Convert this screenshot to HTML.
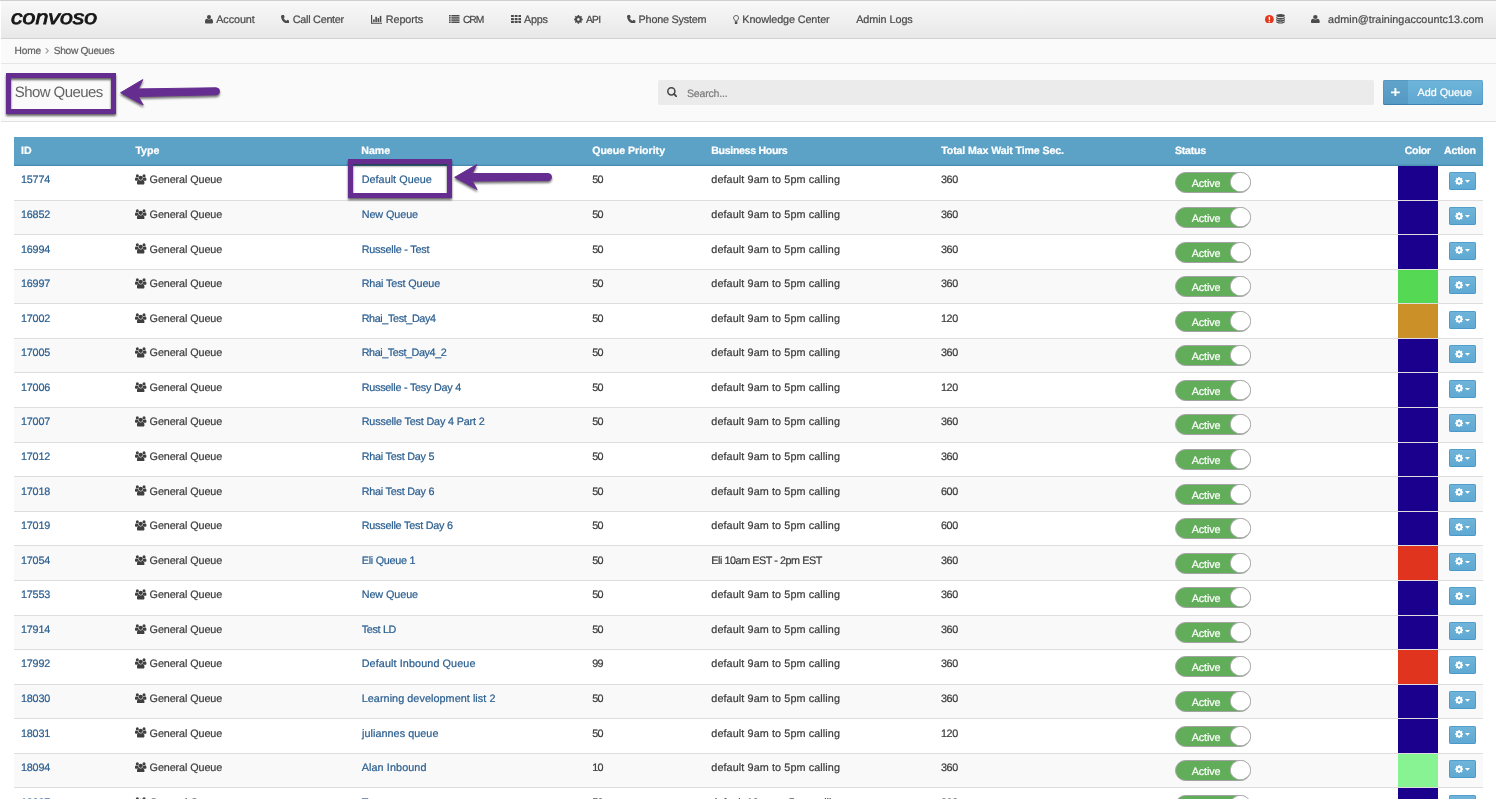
<!DOCTYPE html>
<html lang="en"><head><meta charset="utf-8"><title>Show Queues</title><style>
html,body{margin:0;padding:0;background:#fff}
body{width:1496px;height:799px;overflow:hidden;position:relative;font-family:"Liberation Sans",sans-serif}
#w{position:absolute;left:0;top:0;width:1496px;height:799px;overflow:hidden;will-change:transform}
.t{position:absolute;white-space:nowrap;line-height:16px;text-rendering:geometricPrecision;-webkit-text-stroke:.22px currentColor}
.i{position:absolute;display:block}
.tg{position:absolute;width:75.5px;height:20.6px;box-sizing:border-box;border:1px solid #a3a3a3;border-radius:11px;background:#61ad5a}
.tg i{position:absolute;right:-1px;top:-0.6px;width:20.8px;height:19.8px;border-radius:50%;background:#fff;box-shadow:inset 0 0 0 .7px rgba(125,125,125,.75)}
.ab{position:absolute;width:27px;height:18px;border-radius:2px;background:linear-gradient(#70b5da,#5ea8d2);box-shadow:inset 0 0 0 .8px rgba(55,140,195,.7)}
</style></head><body><div id="w">
<div style="position:absolute;left:0.00px;top:0.00px;width:1496.00px;height:1.00px;background:#cfcfcf"></div>
<div style="position:absolute;left:1.00px;top:1.00px;width:1495.00px;height:37.00px;background:linear-gradient(#f8f8f8,#e8e8e8)"></div>
<div style="position:absolute;left:1.00px;top:38.00px;width:1495.00px;height:1.00px;background:#d2d2d2"></div>
<div style="position:absolute;left:1.00px;top:39.00px;width:1495.00px;height:24.00px;background:#fafafa"></div>
<div style="position:absolute;left:1.00px;top:63.00px;width:1495.00px;height:1.00px;background:#e6e6e6"></div>
<div style="position:absolute;left:1.00px;top:64.00px;width:1495.00px;height:57.00px;background:#fafafa"></div>
<div style="position:absolute;left:1.00px;top:121.00px;width:1495.00px;height:1.00px;background:#e2e2e2"></div>
<nav aria-label="Main navigation">
<span class="t" style="left:10.6px;top:1px;font-size:19.8px;line-height:34px;font-style:italic;color:#161616;letter-spacing:0px;-webkit-text-stroke:0.8px #161616;transform:scaleX(1.17);transform-origin:0 50%">convoso</span>
<svg class="i" style="left:205.00px;top:15.30px;width:8.00px;height:8.50px;color:#4b4b4b" viewBox="0 0 14 15" preserveAspectRatio="none"><circle cx="7" cy="3.700" r="3.600" fill="currentColor"/><path fill="currentColor" d="M0 12.600v-1.400c0-3 1.500-4.500 3.200-4.600 1 .9 2.300 1.400 3.800 1.400s2.800-.5 3.800-1.400c1.700.1 3.200 1.600 3.200 4.600v1.400c0 1.300-1 2.400-2.400 2.400H2.400C1 15 0 13.900 0 12.600z"/></svg>
<span class="t " style="left:216.20px;top:12.00px;font-size:10.80px;color:#4b4b4b;letter-spacing:-0.067px;">Account</span>
<svg class="i" style="left:280.70px;top:14.80px;width:8.40px;height:8.60px;color:#4b4b4b" viewBox="0.8 0.8 14.4 14.4" preserveAspectRatio="none"><path fill="currentColor" d="M3.400.8 5.800.8 7.200 4.600 5.300 5.900C6.200 7.900 8.100 9.800 10.100 10.700L11.400 8.800 15.200 10.200 15.200 12.600C15.200 14 14 15.200 12.600 15.200 6.100 14.800 1.200 9.900.8 3.400.8 2 2 .8 3.400.8z"/></svg>
<span class="t " style="left:292.80px;top:12.00px;font-size:10.80px;color:#4b4b4b;letter-spacing:-0.260px;">Call Center</span>
<svg class="i" style="left:370.50px;top:14.80px;width:11.70px;height:8.80px;color:#4b4b4b" viewBox="0 0 20 16" preserveAspectRatio="none"><path fill="currentColor" d="M0 0h2v14H20v2H0z"/><rect x="3.600" y="8" width="2.700" height="4.800" fill="currentColor"/><rect x="7.400" y="3.200" width="2.700" height="9.600" fill="currentColor"/><rect x="11.200" y="5.600" width="2.700" height="7.200" fill="currentColor"/><rect x="15" y="1.600" width="2.700" height="11.200" fill="currentColor"/></svg>
<span class="t " style="left:385.80px;top:12.00px;font-size:10.80px;color:#4b4b4b;letter-spacing:-0.083px;">Reports</span>
<svg class="i" style="left:449.20px;top:15.00px;width:10.50px;height:8.00px;color:#4b4b4b" viewBox="0 0 20 16" preserveAspectRatio="none"><g fill="currentColor"><rect x="0" y="0.00" width="3.2" height="3"/><rect x="4.400" y="0.00" width="15.600" height="3"/><rect x="0" y="4.35" width="3.2" height="3"/><rect x="4.400" y="4.35" width="15.600" height="3"/><rect x="0" y="8.70" width="3.2" height="3"/><rect x="4.400" y="8.70" width="15.600" height="3"/><rect x="0" y="13.00" width="3.2" height="3"/><rect x="4.400" y="13.00" width="15.600" height="3"/></g></svg>
<span class="t " style="left:462.90px;top:13.00px;font-size:10.30px;color:#4b4b4b;letter-spacing:-1.025px;">CRM</span>
<svg class="i" style="left:510.70px;top:15.00px;width:10.30px;height:8.00px;color:#4b4b4b" viewBox="0 0 20 15" preserveAspectRatio="none"><g fill="currentColor"><rect x="0.0" y="0.0" width="5.600" height="3.900" rx=".6"/><rect x="0.0" y="5.5" width="5.600" height="3.900" rx=".6"/><rect x="0.0" y="11.0" width="5.600" height="3.900" rx=".6"/><rect x="7.2" y="0.0" width="5.600" height="3.900" rx=".6"/><rect x="7.2" y="5.5" width="5.600" height="3.900" rx=".6"/><rect x="7.2" y="11.0" width="5.600" height="3.900" rx=".6"/><rect x="14.4" y="0.0" width="5.600" height="3.900" rx=".6"/><rect x="14.4" y="5.5" width="5.600" height="3.900" rx=".6"/><rect x="14.4" y="11.0" width="5.600" height="3.900" rx=".6"/></g></svg>
<span class="t " style="left:524.00px;top:12.00px;font-size:10.80px;color:#4b4b4b;letter-spacing:-0.267px;">Apps</span>
<svg class="i" style="left:574.20px;top:14.80px;width:8.80px;height:8.80px;color:#4b4b4b" viewBox="0 0 16 16" preserveAspectRatio="none"><path fill="currentColor" fill-rule="evenodd" d="M15.88 6.62 L15.88 9.38 L14.13 9.47 L13.37 11.29 L14.55 12.60 L12.60 14.55 L11.29 13.37 L9.47 14.13 L9.38 15.88 L6.62 15.88 L6.53 14.13 L4.71 13.37 L3.40 14.55 L1.45 12.60 L2.63 11.29 L1.87 9.47 L0.12 9.38 L0.12 6.62 L1.87 6.53 L2.63 4.71 L1.45 3.40 L3.40 1.45 L4.71 2.63 L6.53 1.87 L6.62 0.12 L9.38 0.12 L9.47 1.87 L11.29 2.63 L12.60 1.45 L14.55 3.40 L13.37 4.71 L14.13 6.53Z M5.60 8.00 a2.40 2.40 0 1 0 4.80 0 a2.40 2.40 0 1 0 -4.80 0Z"/></svg>
<span class="t " style="left:585.90px;top:13.00px;font-size:10.30px;color:#4b4b4b;letter-spacing:-0.750px;">API</span>
<svg class="i" style="left:627.20px;top:14.80px;width:8.40px;height:8.60px;color:#4b4b4b" viewBox="0.8 0.8 14.4 14.4" preserveAspectRatio="none"><path fill="currentColor" d="M3.400.8 5.800.8 7.200 4.600 5.300 5.900C6.200 7.900 8.100 9.800 10.100 10.700L11.400 8.800 15.200 10.200 15.200 12.600C15.200 14 14 15.200 12.600 15.200 6.100 14.800 1.200 9.900.8 3.400.8 2 2 .8 3.400.8z"/></svg>
<span class="t " style="left:638.60px;top:12.00px;font-size:10.80px;color:#4b4b4b;letter-spacing:-0.205px;">Phone System</span>
<svg class="i" style="left:732.90px;top:14.60px;width:6.20px;height:9.40px;color:#4b4b4b" viewBox="0 0 10 16" preserveAspectRatio="none"><path fill="none" stroke="currentColor" stroke-width="1.500" d="M5 .9C2.600.9.900 2.700.900 4.900c0 1.500.8 2.400 1.500 3.300.5.700.8 1.300.8 2.300h3.600c0-1 .3-1.600.8-2.300.7-.9 1.500-1.800 1.500-3.300C9.100 2.700 7.400.9 5 .9z"/><path fill="currentColor" d="M3 11.400h4v3c0 .9-.7 1.600-1.600 1.600h-.8C3.700 16 3 15.300 3 14.400z"/></svg>
<span class="t " style="left:742.30px;top:12.00px;font-size:10.80px;color:#4b4b4b;letter-spacing:-0.097px;">Knowledge Center</span>
<span class="t " style="left:856.20px;top:12.00px;font-size:10.80px;color:#4b4b4b;letter-spacing:-0.050px;">Admin Logs</span>
<svg class="i" style="left:1264.80px;top:14.60px;width:8.80px;height:8.80px;color:#444" viewBox="0 0 16 16" preserveAspectRatio="none"><circle cx="8" cy="8" r="8" fill="#e6361c"/><path fill="#fff" d="M6.600 3h2.800l-.4 6.200H7zM6.700 10.400h2.600V13H6.700z"/></svg>
<svg class="i" style="left:1276.30px;top:14.40px;width:9.10px;height:9.60px;color:#4b4b4b" viewBox="0 0 16 17" preserveAspectRatio="none"><g fill="currentColor"><ellipse cx="8" cy="2.800" rx="7.600" ry="2.800"/><path d="M.4 4.700c1 1.600 4 2.400 7.600 2.400s6.600-.8 7.600-2.400v2.500C15.600 8.700 12.200 10 8 10S.4 8.700.4 7.200z"/><path d="M.4 8.600c1 1.600 4 2.400 7.600 2.400s6.600-.8 7.600-2.400v2.500c0 1.500-3.400 2.800-7.600 2.800S.4 12.600.4 11.100z"/><path d="M.4 12.500c1 1.600 4 2.400 7.600 2.400s6.600-.8 7.600-2.400v1.700C15.600 15.700 12.200 17 8 17S.4 15.700.4 14.200z"/></g></svg>
<svg class="i" style="left:1310.90px;top:15.10px;width:8.70px;height:8.40px;color:#4b4b4b" viewBox="0 0 14 15" preserveAspectRatio="none"><circle cx="7" cy="3.700" r="3.600" fill="currentColor"/><path fill="currentColor" d="M0 12.600v-1.400c0-3 1.500-4.500 3.200-4.600 1 .9 2.300 1.400 3.800 1.400s2.800-.5 3.800-1.400c1.700.1 3.200 1.600 3.200 4.600v1.400c0 1.300-1 2.400-2.400 2.400H2.400C1 15 0 13.900 0 12.600z"/></svg>
<span class="t " style="left:1328.10px;top:12.00px;font-size:10.80px;color:#4b4b4b;letter-spacing:0.039px;">admin@trainingaccountc13.com</span>
</nav>
<div role="navigation" aria-label="Breadcrumb">
<span class="t " style="left:14.60px;top:44.00px;font-size:10.20px;color:#636363;letter-spacing:-0.233px;">Home</span>
<span class="t " style="left:44.90px;top:42.00px;font-size:12.50px;color:#9a9a9a;">›</span>
<span class="t " style="left:53.70px;top:44.00px;font-size:10.20px;color:#636363;letter-spacing:-0.305px;">Show Queues</span>
</div>
<header>
<span class="t " style="left:14.80px;top:85.00px;font-size:15.00px;color:#646464;letter-spacing:-0.585px;-webkit-text-stroke:0;">Show Queues</span>
<div style="position:absolute;left:658.00px;top:80.30px;width:716.00px;height:24.40px;background:#ebebeb;border-radius:2px"></div>
<svg class="i" style="left:667.00px;top:87.00px;width:10.40px;height:10.40px;color:#444" viewBox="0 0 16 16" preserveAspectRatio="none"><circle cx="6.700" cy="6.700" r="5.500" fill="none" stroke="currentColor" stroke-width="2.300"/><path d="M11 11 14.700 14.700" stroke="currentColor" stroke-width="2.700" stroke-linecap="round"/></svg>
<span class="t " style="left:687.00px;top:86.00px;font-size:10.60px;color:#7e7e7e;letter-spacing:-0.212px;">Search...</span>
<div style="position:absolute;left:1383px;top:80px;width:100px;height:24.8px;border-radius:2px;background:linear-gradient(#6fb5da,#5ea7d1);box-shadow:inset 0 -1px 0 rgba(40,110,160,.55), inset 0 0 0 .5px rgba(60,130,175,.5)"></div>
<div style="position:absolute;left:1383.00px;top:80.00px;width:24.90px;height:24.80px;background:rgba(60,120,160,.28);border-radius:2px 0 0 2px"></div>
<svg class="i" style="left:1391.00px;top:87.70px;width:8.80px;height:8.60px;color:#fff" viewBox="0 0 16 16" preserveAspectRatio="none"><path fill="currentColor" d="M6.300 0h3.400v6.300H16v3.400H9.700V16H6.300V9.700H0V6.300h6.300z"/></svg>
<span class="t " style="left:1417.50px;top:85.00px;font-size:10.80px;color:#fff;letter-spacing:-0.019px;">Add Queue</span>
</header>
<main role="table" aria-label="Queues">
<div role="row">
<div style="position:absolute;left:14.00px;top:137.00px;width:1469.00px;height:28.64px;background:#5ca2c7;box-shadow:inset 0 -1.500px 0 #4b8db3"></div>
<span class="t " style="left:21.00px;top:143.00px;font-size:10.60px;color:#fff;font-weight:bold;">ID</span>
<span class="t " style="left:135.40px;top:143.00px;font-size:10.60px;color:#fff;font-weight:bold;">Type</span>
<span class="t " style="left:361.30px;top:143.00px;font-size:10.60px;color:#fff;font-weight:bold;">Name</span>
<span class="t " style="left:592.20px;top:143.00px;font-size:10.60px;color:#fff;font-weight:bold;letter-spacing:-0.012px;">Queue Priority</span>
<span class="t " style="left:711.20px;top:143.00px;font-size:10.60px;color:#fff;font-weight:bold;letter-spacing:-0.315px;">Business Hours</span>
<span class="t " style="left:941.20px;top:143.00px;font-size:10.60px;color:#fff;font-weight:bold;letter-spacing:-0.107px;">Total Max Wait Time Sec.</span>
<span class="t " style="left:1175.00px;top:143.00px;font-size:10.60px;color:#fff;font-weight:bold;letter-spacing:-0.240px;">Status</span>
<span class="t " style="left:1404.80px;top:143.00px;font-size:10.60px;color:#fff;font-weight:bold;letter-spacing:-0.375px;">Color</span>
<span class="t " style="left:1444.00px;top:143.00px;font-size:10.60px;color:#fff;font-weight:bold;letter-spacing:-0.200px;">Action</span>
</div>
<div role="row">
<div style="position:absolute;left:14.00px;top:166.00px;width:1469.00px;height:34.00px;background:#fff;"></div>
<div style="position:absolute;left:1398.00px;top:166.00px;width:40.00px;height:34.00px;background:#1a008c"></div>
<span class="t " style="left:21.00px;top:172.00px;font-size:10.80px;color:#2c5f90;letter-spacing:-0.213px;">15774</span>
<svg class="i" style="left:135.30px;top:174.30px;width:11.40px;height:10.50px;color:#3f3f3f" viewBox="0 0 20 18" preserveAspectRatio="none"><g fill="currentColor"><circle cx="4.100" cy="3.300" r="2.700"/><circle cx="15.900" cy="3.300" r="2.700"/><path d="M0 10.300V8.700C0 7 1 6.100 2 6.100c.6.500 1.300.8 2.100.8.600 0 1.100-.1 1.600-.4 0 1.400.5 2.600 1.400 3.500-1.300.1-2.400.700-3.100 1.500H1.400C.6 11.500 0 11 0 10.300z"/><path d="M20 10.300V8.700c0-1.700-1-2.600-2-2.600-.6.500-1.300.8-2.100.8-.6 0-1.100-.1-1.600-.4 0 1.400-.5 2.600-1.400 3.500 1.300.1 2.400.700 3.100 1.500h2.600c.8 0 1.400-.5 1.400-1.200z"/><circle cx="10" cy="6.500" r="3.700"/><path d="M3.500 16.200v-1.500c0-3.100 1.800-4.800 3.400-4.800.8.700 1.900 1.100 3.100 1.100s2.300-.4 3.100-1.100c1.600 0 3.400 1.700 3.400 4.800v1.500c0 1-.8 1.800-1.800 1.800H5.300c-1 0-1.800-.8-1.800-1.800z"/></g></svg>
<span class="t " style="left:149.60px;top:172.00px;font-size:10.80px;color:#3c3c3c;letter-spacing:-0.096px;">General Queue</span>
<span class="t " style="left:361.70px;top:172.00px;font-size:10.80px;color:#2c5f90;letter-spacing:0.037px;">Default Queue</span>
<span class="t " style="left:592.20px;top:172.00px;font-size:10.80px;color:#3c3c3c;letter-spacing:-0.600px;">50</span>
<span class="t " style="left:711.30px;top:172.00px;font-size:10.80px;color:#3c3c3c;letter-spacing:0.106px;">default 9am to 5pm calling</span>
<span class="t " style="left:941.00px;top:172.00px;font-size:10.80px;color:#3c3c3c;letter-spacing:-0.400px;">360</span>
<div class="tg" style="left:1175px;top:172.00px"><i></i></div>
<span class="t " style="left:1191.70px;top:176.00px;font-size:10.80px;color:#fff;letter-spacing:-0.120px;">Active</span>
<div class="ab" style="left:1449px;top:172.44px"></div>
<svg class="i" style="left:1454.90px;top:177.04px;width:8.30px;height:8.30px;color:#fff" viewBox="0 0 16 16" preserveAspectRatio="none"><path fill="currentColor" fill-rule="evenodd" d="M15.88 6.62 L15.88 9.38 L14.13 9.47 L13.37 11.29 L14.55 12.60 L12.60 14.55 L11.29 13.37 L9.47 14.13 L9.38 15.88 L6.62 15.88 L6.53 14.13 L4.71 13.37 L3.40 14.55 L1.45 12.60 L2.63 11.29 L1.87 9.47 L0.12 9.38 L0.12 6.62 L1.87 6.53 L2.63 4.71 L1.45 3.40 L3.40 1.45 L4.71 2.63 L6.53 1.87 L6.62 0.12 L9.38 0.12 L9.47 1.87 L11.29 2.63 L12.60 1.45 L14.55 3.40 L13.37 4.71 L14.13 6.53Z M5.60 8.00 a2.40 2.40 0 1 0 4.80 0 a2.40 2.40 0 1 0 -4.80 0Z"/></svg>
<svg class="i" style="left:1465.00px;top:180.34px;width:5.00px;height:2.70px;color:#fff" viewBox="0 0 10 5" preserveAspectRatio="none"><path fill="currentColor" d="M0 0h10L5 5z"/></svg>
</div>
<div role="row">
<div style="position:absolute;left:14.00px;top:200.00px;width:1469.00px;height:34.00px;background:#f9f9f9;border-top:1px solid #dedede;box-sizing:border-box"></div>
<div style="position:absolute;left:1398.00px;top:201.00px;width:40.00px;height:33.00px;background:#1a008c"></div>
<span class="t " style="left:21.00px;top:207.00px;font-size:10.80px;color:#2c5f90;letter-spacing:-0.213px;">16852</span>
<svg class="i" style="left:135.30px;top:208.87px;width:11.40px;height:10.50px;color:#3f3f3f" viewBox="0 0 20 18" preserveAspectRatio="none"><g fill="currentColor"><circle cx="4.100" cy="3.300" r="2.700"/><circle cx="15.900" cy="3.300" r="2.700"/><path d="M0 10.300V8.700C0 7 1 6.100 2 6.100c.6.500 1.300.8 2.100.8.600 0 1.100-.1 1.600-.4 0 1.400.5 2.600 1.400 3.500-1.300.1-2.400.700-3.100 1.500H1.400C.6 11.500 0 11 0 10.300z"/><path d="M20 10.300V8.700c0-1.700-1-2.600-2-2.600-.6.500-1.300.8-2.100.8-.6 0-1.100-.1-1.600-.4 0 1.400-.5 2.600-1.400 3.500 1.300.1 2.400.700 3.100 1.500h2.600c.8 0 1.400-.5 1.400-1.200z"/><circle cx="10" cy="6.500" r="3.700"/><path d="M3.500 16.200v-1.500c0-3.100 1.800-4.800 3.400-4.800.8.700 1.900 1.100 3.100 1.100s2.300-.4 3.100-1.100c1.600 0 3.400 1.700 3.400 4.800v1.500c0 1-.8 1.800-1.800 1.800H5.300c-1 0-1.800-.8-1.800-1.800z"/></g></svg>
<span class="t " style="left:149.60px;top:207.00px;font-size:10.80px;color:#3c3c3c;letter-spacing:-0.096px;">General Queue</span>
<span class="t " style="left:361.70px;top:207.00px;font-size:10.80px;color:#2c5f90;letter-spacing:-0.081px;">New Queue</span>
<span class="t " style="left:592.20px;top:207.00px;font-size:10.80px;color:#3c3c3c;letter-spacing:-0.600px;">50</span>
<span class="t " style="left:711.30px;top:207.00px;font-size:10.80px;color:#3c3c3c;letter-spacing:0.106px;">default 9am to 5pm calling</span>
<span class="t " style="left:941.00px;top:207.00px;font-size:10.80px;color:#3c3c3c;letter-spacing:-0.400px;">360</span>
<div class="tg" style="left:1175px;top:207.00px"><i></i></div>
<span class="t " style="left:1191.70px;top:211.00px;font-size:10.80px;color:#fff;letter-spacing:-0.120px;">Active</span>
<div class="ab" style="left:1449px;top:207.01px"></div>
<svg class="i" style="left:1454.90px;top:211.61px;width:8.30px;height:8.30px;color:#fff" viewBox="0 0 16 16" preserveAspectRatio="none"><path fill="currentColor" fill-rule="evenodd" d="M15.88 6.62 L15.88 9.38 L14.13 9.47 L13.37 11.29 L14.55 12.60 L12.60 14.55 L11.29 13.37 L9.47 14.13 L9.38 15.88 L6.62 15.88 L6.53 14.13 L4.71 13.37 L3.40 14.55 L1.45 12.60 L2.63 11.29 L1.87 9.47 L0.12 9.38 L0.12 6.62 L1.87 6.53 L2.63 4.71 L1.45 3.40 L3.40 1.45 L4.71 2.63 L6.53 1.87 L6.62 0.12 L9.38 0.12 L9.47 1.87 L11.29 2.63 L12.60 1.45 L14.55 3.40 L13.37 4.71 L14.13 6.53Z M5.60 8.00 a2.40 2.40 0 1 0 4.80 0 a2.40 2.40 0 1 0 -4.80 0Z"/></svg>
<svg class="i" style="left:1465.00px;top:214.91px;width:5.00px;height:2.70px;color:#fff" viewBox="0 0 10 5" preserveAspectRatio="none"><path fill="currentColor" d="M0 0h10L5 5z"/></svg>
</div>
<div role="row">
<div style="position:absolute;left:14.00px;top:234.00px;width:1469.00px;height:35.00px;background:#fff;border-top:1px solid #dedede;box-sizing:border-box"></div>
<div style="position:absolute;left:1398.00px;top:235.00px;width:40.00px;height:34.00px;background:#1a008c"></div>
<span class="t " style="left:21.00px;top:242.00px;font-size:10.80px;color:#2c5f90;letter-spacing:-0.213px;">16994</span>
<svg class="i" style="left:135.30px;top:243.44px;width:11.40px;height:10.50px;color:#3f3f3f" viewBox="0 0 20 18" preserveAspectRatio="none"><g fill="currentColor"><circle cx="4.100" cy="3.300" r="2.700"/><circle cx="15.900" cy="3.300" r="2.700"/><path d="M0 10.300V8.700C0 7 1 6.100 2 6.100c.6.500 1.300.8 2.100.8.600 0 1.100-.1 1.600-.4 0 1.400.5 2.600 1.400 3.500-1.300.1-2.400.700-3.100 1.500H1.400C.6 11.500 0 11 0 10.300z"/><path d="M20 10.300V8.700c0-1.700-1-2.600-2-2.600-.6.500-1.300.8-2.100.8-.6 0-1.100-.1-1.600-.4 0 1.400-.5 2.600-1.400 3.500 1.300.1 2.400.700 3.100 1.500h2.600c.8 0 1.400-.5 1.400-1.200z"/><circle cx="10" cy="6.500" r="3.700"/><path d="M3.500 16.200v-1.500c0-3.100 1.800-4.800 3.400-4.800.8.700 1.900 1.100 3.100 1.100s2.300-.4 3.100-1.100c1.600 0 3.400 1.700 3.400 4.800v1.500c0 1-.8 1.800-1.800 1.800H5.300c-1 0-1.800-.8-1.800-1.800z"/></g></svg>
<span class="t " style="left:149.60px;top:242.00px;font-size:10.80px;color:#3c3c3c;letter-spacing:-0.096px;">General Queue</span>
<span class="t " style="left:361.70px;top:242.00px;font-size:10.80px;color:#2c5f90;letter-spacing:-0.196px;">Russelle - Test</span>
<span class="t " style="left:592.20px;top:242.00px;font-size:10.80px;color:#3c3c3c;letter-spacing:-0.600px;">50</span>
<span class="t " style="left:711.30px;top:242.00px;font-size:10.80px;color:#3c3c3c;letter-spacing:0.106px;">default 9am to 5pm calling</span>
<span class="t " style="left:941.00px;top:242.00px;font-size:10.80px;color:#3c3c3c;letter-spacing:-0.400px;">360</span>
<div class="tg" style="left:1175px;top:242.00px"><i></i></div>
<span class="t " style="left:1191.70px;top:246.00px;font-size:10.80px;color:#fff;letter-spacing:-0.120px;">Active</span>
<div class="ab" style="left:1449px;top:241.58px"></div>
<svg class="i" style="left:1454.90px;top:246.18px;width:8.30px;height:8.30px;color:#fff" viewBox="0 0 16 16" preserveAspectRatio="none"><path fill="currentColor" fill-rule="evenodd" d="M15.88 6.62 L15.88 9.38 L14.13 9.47 L13.37 11.29 L14.55 12.60 L12.60 14.55 L11.29 13.37 L9.47 14.13 L9.38 15.88 L6.62 15.88 L6.53 14.13 L4.71 13.37 L3.40 14.55 L1.45 12.60 L2.63 11.29 L1.87 9.47 L0.12 9.38 L0.12 6.62 L1.87 6.53 L2.63 4.71 L1.45 3.40 L3.40 1.45 L4.71 2.63 L6.53 1.87 L6.62 0.12 L9.38 0.12 L9.47 1.87 L11.29 2.63 L12.60 1.45 L14.55 3.40 L13.37 4.71 L14.13 6.53Z M5.60 8.00 a2.40 2.40 0 1 0 4.80 0 a2.40 2.40 0 1 0 -4.80 0Z"/></svg>
<svg class="i" style="left:1465.00px;top:249.48px;width:5.00px;height:2.70px;color:#fff" viewBox="0 0 10 5" preserveAspectRatio="none"><path fill="currentColor" d="M0 0h10L5 5z"/></svg>
</div>
<div role="row">
<div style="position:absolute;left:14.00px;top:269.00px;width:1469.00px;height:34.00px;background:#f9f9f9;border-top:1px solid #dedede;box-sizing:border-box"></div>
<div style="position:absolute;left:1398.00px;top:270.00px;width:40.00px;height:33.00px;background:#55d955"></div>
<span class="t " style="left:21.00px;top:276.00px;font-size:10.80px;color:#2c5f90;letter-spacing:-0.213px;">16997</span>
<svg class="i" style="left:135.30px;top:278.01px;width:11.40px;height:10.50px;color:#3f3f3f" viewBox="0 0 20 18" preserveAspectRatio="none"><g fill="currentColor"><circle cx="4.100" cy="3.300" r="2.700"/><circle cx="15.900" cy="3.300" r="2.700"/><path d="M0 10.300V8.700C0 7 1 6.100 2 6.100c.6.500 1.300.8 2.100.8.600 0 1.100-.1 1.600-.4 0 1.400.5 2.600 1.400 3.500-1.300.1-2.400.700-3.100 1.500H1.400C.6 11.500 0 11 0 10.300z"/><path d="M20 10.300V8.700c0-1.700-1-2.600-2-2.600-.6.500-1.300.8-2.100.8-.6 0-1.100-.1-1.600-.4 0 1.400-.5 2.600-1.400 3.500 1.300.1 2.400.700 3.100 1.500h2.600c.8 0 1.400-.5 1.400-1.200z"/><circle cx="10" cy="6.500" r="3.700"/><path d="M3.500 16.200v-1.500c0-3.100 1.800-4.800 3.400-4.800.8.700 1.900 1.100 3.100 1.100s2.300-.4 3.100-1.100c1.600 0 3.400 1.700 3.400 4.800v1.500c0 1-.8 1.800-1.800 1.800H5.300c-1 0-1.800-.8-1.800-1.800z"/></g></svg>
<span class="t " style="left:149.60px;top:276.00px;font-size:10.80px;color:#3c3c3c;letter-spacing:-0.096px;">General Queue</span>
<span class="t " style="left:361.70px;top:276.00px;font-size:10.80px;color:#2c5f90;letter-spacing:-0.125px;">Rhai Test Queue</span>
<span class="t " style="left:592.20px;top:276.00px;font-size:10.80px;color:#3c3c3c;letter-spacing:-0.600px;">50</span>
<span class="t " style="left:711.30px;top:276.00px;font-size:10.80px;color:#3c3c3c;letter-spacing:0.106px;">default 9am to 5pm calling</span>
<span class="t " style="left:941.00px;top:276.00px;font-size:10.80px;color:#3c3c3c;letter-spacing:-0.400px;">360</span>
<div class="tg" style="left:1175px;top:276.00px"><i></i></div>
<span class="t " style="left:1191.70px;top:280.00px;font-size:10.80px;color:#fff;letter-spacing:-0.120px;">Active</span>
<div class="ab" style="left:1449px;top:276.15px"></div>
<svg class="i" style="left:1454.90px;top:280.75px;width:8.30px;height:8.30px;color:#fff" viewBox="0 0 16 16" preserveAspectRatio="none"><path fill="currentColor" fill-rule="evenodd" d="M15.88 6.62 L15.88 9.38 L14.13 9.47 L13.37 11.29 L14.55 12.60 L12.60 14.55 L11.29 13.37 L9.47 14.13 L9.38 15.88 L6.62 15.88 L6.53 14.13 L4.71 13.37 L3.40 14.55 L1.45 12.60 L2.63 11.29 L1.87 9.47 L0.12 9.38 L0.12 6.62 L1.87 6.53 L2.63 4.71 L1.45 3.40 L3.40 1.45 L4.71 2.63 L6.53 1.87 L6.62 0.12 L9.38 0.12 L9.47 1.87 L11.29 2.63 L12.60 1.45 L14.55 3.40 L13.37 4.71 L14.13 6.53Z M5.60 8.00 a2.40 2.40 0 1 0 4.80 0 a2.40 2.40 0 1 0 -4.80 0Z"/></svg>
<svg class="i" style="left:1465.00px;top:284.05px;width:5.00px;height:2.70px;color:#fff" viewBox="0 0 10 5" preserveAspectRatio="none"><path fill="currentColor" d="M0 0h10L5 5z"/></svg>
</div>
<div role="row">
<div style="position:absolute;left:14.00px;top:303.00px;width:1469.00px;height:35.00px;background:#fff;border-top:1px solid #dedede;box-sizing:border-box"></div>
<div style="position:absolute;left:1398.00px;top:304.00px;width:40.00px;height:34.00px;background:#cc9029"></div>
<span class="t " style="left:21.00px;top:311.00px;font-size:10.80px;color:#2c5f90;letter-spacing:-0.213px;">17002</span>
<svg class="i" style="left:135.30px;top:312.58px;width:11.40px;height:10.50px;color:#3f3f3f" viewBox="0 0 20 18" preserveAspectRatio="none"><g fill="currentColor"><circle cx="4.100" cy="3.300" r="2.700"/><circle cx="15.900" cy="3.300" r="2.700"/><path d="M0 10.300V8.700C0 7 1 6.100 2 6.100c.6.500 1.300.8 2.100.8.600 0 1.100-.1 1.600-.4 0 1.400.5 2.600 1.400 3.500-1.300.1-2.400.700-3.100 1.500H1.400C.6 11.500 0 11 0 10.300z"/><path d="M20 10.300V8.700c0-1.700-1-2.600-2-2.600-.6.500-1.300.8-2.100.8-.6 0-1.100-.1-1.600-.4 0 1.400-.5 2.600-1.400 3.500 1.300.1 2.400.700 3.100 1.500h2.600c.8 0 1.400-.5 1.400-1.200z"/><circle cx="10" cy="6.500" r="3.700"/><path d="M3.500 16.200v-1.500c0-3.100 1.800-4.800 3.400-4.800.8.700 1.900 1.100 3.100 1.100s2.300-.4 3.100-1.100c1.600 0 3.400 1.700 3.400 4.800v1.500c0 1-.8 1.800-1.800 1.800H5.300c-1 0-1.800-.8-1.800-1.800z"/></g></svg>
<span class="t " style="left:149.60px;top:311.00px;font-size:10.80px;color:#3c3c3c;letter-spacing:-0.096px;">General Queue</span>
<span class="t " style="left:361.70px;top:311.00px;font-size:10.80px;color:#2c5f90;letter-spacing:-0.381px;">Rhai_Test_Day4</span>
<span class="t " style="left:592.20px;top:311.00px;font-size:10.80px;color:#3c3c3c;letter-spacing:-0.600px;">50</span>
<span class="t " style="left:711.30px;top:311.00px;font-size:10.80px;color:#3c3c3c;letter-spacing:0.106px;">default 9am to 5pm calling</span>
<span class="t " style="left:941.00px;top:311.00px;font-size:10.80px;color:#3c3c3c;letter-spacing:-0.400px;">120</span>
<div class="tg" style="left:1175px;top:311.00px"><i></i></div>
<span class="t " style="left:1191.70px;top:315.00px;font-size:10.80px;color:#fff;letter-spacing:-0.120px;">Active</span>
<div class="ab" style="left:1449px;top:310.72px"></div>
<svg class="i" style="left:1454.90px;top:315.32px;width:8.30px;height:8.30px;color:#fff" viewBox="0 0 16 16" preserveAspectRatio="none"><path fill="currentColor" fill-rule="evenodd" d="M15.88 6.62 L15.88 9.38 L14.13 9.47 L13.37 11.29 L14.55 12.60 L12.60 14.55 L11.29 13.37 L9.47 14.13 L9.38 15.88 L6.62 15.88 L6.53 14.13 L4.71 13.37 L3.40 14.55 L1.45 12.60 L2.63 11.29 L1.87 9.47 L0.12 9.38 L0.12 6.62 L1.87 6.53 L2.63 4.71 L1.45 3.40 L3.40 1.45 L4.71 2.63 L6.53 1.87 L6.62 0.12 L9.38 0.12 L9.47 1.87 L11.29 2.63 L12.60 1.45 L14.55 3.40 L13.37 4.71 L14.13 6.53Z M5.60 8.00 a2.40 2.40 0 1 0 4.80 0 a2.40 2.40 0 1 0 -4.80 0Z"/></svg>
<svg class="i" style="left:1465.00px;top:318.62px;width:5.00px;height:2.70px;color:#fff" viewBox="0 0 10 5" preserveAspectRatio="none"><path fill="currentColor" d="M0 0h10L5 5z"/></svg>
</div>
<div role="row">
<div style="position:absolute;left:14.00px;top:338.00px;width:1469.00px;height:34.00px;background:#f9f9f9;border-top:1px solid #dedede;box-sizing:border-box"></div>
<div style="position:absolute;left:1398.00px;top:339.00px;width:40.00px;height:33.00px;background:#1a008c"></div>
<span class="t " style="left:21.00px;top:345.00px;font-size:10.80px;color:#2c5f90;letter-spacing:-0.213px;">17005</span>
<svg class="i" style="left:135.30px;top:347.15px;width:11.40px;height:10.50px;color:#3f3f3f" viewBox="0 0 20 18" preserveAspectRatio="none"><g fill="currentColor"><circle cx="4.100" cy="3.300" r="2.700"/><circle cx="15.900" cy="3.300" r="2.700"/><path d="M0 10.300V8.700C0 7 1 6.100 2 6.100c.6.500 1.300.8 2.100.8.600 0 1.100-.1 1.600-.4 0 1.400.5 2.600 1.400 3.500-1.300.1-2.400.700-3.100 1.500H1.400C.6 11.500 0 11 0 10.300z"/><path d="M20 10.300V8.700c0-1.700-1-2.600-2-2.600-.6.500-1.300.8-2.100.8-.6 0-1.100-.1-1.600-.4 0 1.400-.5 2.600-1.400 3.500 1.300.1 2.400.700 3.100 1.500h2.600c.8 0 1.400-.5 1.400-1.200z"/><circle cx="10" cy="6.500" r="3.700"/><path d="M3.500 16.200v-1.500c0-3.100 1.800-4.800 3.400-4.800.8.700 1.900 1.100 3.100 1.100s2.300-.4 3.100-1.100c1.600 0 3.400 1.700 3.400 4.800v1.500c0 1-.8 1.800-1.800 1.800H5.300c-1 0-1.800-.8-1.800-1.800z"/></g></svg>
<span class="t " style="left:149.60px;top:345.00px;font-size:10.80px;color:#3c3c3c;letter-spacing:-0.096px;">General Queue</span>
<span class="t " style="left:361.70px;top:345.00px;font-size:10.80px;color:#2c5f90;letter-spacing:-0.410px;">Rhai_Test_Day4_2</span>
<span class="t " style="left:592.20px;top:345.00px;font-size:10.80px;color:#3c3c3c;letter-spacing:-0.600px;">50</span>
<span class="t " style="left:711.30px;top:345.00px;font-size:10.80px;color:#3c3c3c;letter-spacing:0.106px;">default 9am to 5pm calling</span>
<span class="t " style="left:941.00px;top:345.00px;font-size:10.80px;color:#3c3c3c;letter-spacing:-0.400px;">360</span>
<div class="tg" style="left:1175px;top:345.00px"><i></i></div>
<span class="t " style="left:1191.70px;top:349.00px;font-size:10.80px;color:#fff;letter-spacing:-0.120px;">Active</span>
<div class="ab" style="left:1449px;top:345.29px"></div>
<svg class="i" style="left:1454.90px;top:349.89px;width:8.30px;height:8.30px;color:#fff" viewBox="0 0 16 16" preserveAspectRatio="none"><path fill="currentColor" fill-rule="evenodd" d="M15.88 6.62 L15.88 9.38 L14.13 9.47 L13.37 11.29 L14.55 12.60 L12.60 14.55 L11.29 13.37 L9.47 14.13 L9.38 15.88 L6.62 15.88 L6.53 14.13 L4.71 13.37 L3.40 14.55 L1.45 12.60 L2.63 11.29 L1.87 9.47 L0.12 9.38 L0.12 6.62 L1.87 6.53 L2.63 4.71 L1.45 3.40 L3.40 1.45 L4.71 2.63 L6.53 1.87 L6.62 0.12 L9.38 0.12 L9.47 1.87 L11.29 2.63 L12.60 1.45 L14.55 3.40 L13.37 4.71 L14.13 6.53Z M5.60 8.00 a2.40 2.40 0 1 0 4.80 0 a2.40 2.40 0 1 0 -4.80 0Z"/></svg>
<svg class="i" style="left:1465.00px;top:353.19px;width:5.00px;height:2.70px;color:#fff" viewBox="0 0 10 5" preserveAspectRatio="none"><path fill="currentColor" d="M0 0h10L5 5z"/></svg>
</div>
<div role="row">
<div style="position:absolute;left:14.00px;top:372.00px;width:1469.00px;height:35.00px;background:#fff;border-top:1px solid #dedede;box-sizing:border-box"></div>
<div style="position:absolute;left:1398.00px;top:373.00px;width:40.00px;height:34.00px;background:#1a008c"></div>
<span class="t " style="left:21.00px;top:380.00px;font-size:10.80px;color:#2c5f90;letter-spacing:-0.213px;">17006</span>
<svg class="i" style="left:135.30px;top:381.72px;width:11.40px;height:10.50px;color:#3f3f3f" viewBox="0 0 20 18" preserveAspectRatio="none"><g fill="currentColor"><circle cx="4.100" cy="3.300" r="2.700"/><circle cx="15.900" cy="3.300" r="2.700"/><path d="M0 10.300V8.700C0 7 1 6.100 2 6.100c.6.500 1.300.8 2.100.8.600 0 1.100-.1 1.600-.4 0 1.400.5 2.600 1.400 3.500-1.300.1-2.400.700-3.100 1.500H1.400C.6 11.500 0 11 0 10.300z"/><path d="M20 10.300V8.700c0-1.700-1-2.600-2-2.600-.6.500-1.300.8-2.100.8-.6 0-1.100-.1-1.600-.4 0 1.400-.5 2.600-1.400 3.500 1.300.1 2.400.700 3.100 1.500h2.600c.8 0 1.400-.5 1.400-1.200z"/><circle cx="10" cy="6.500" r="3.700"/><path d="M3.500 16.200v-1.500c0-3.100 1.800-4.800 3.400-4.800.8.700 1.900 1.100 3.100 1.100s2.300-.4 3.100-1.100c1.600 0 3.400 1.700 3.400 4.800v1.500c0 1-.8 1.800-1.800 1.800H5.300c-1 0-1.800-.8-1.800-1.800z"/></g></svg>
<span class="t " style="left:149.60px;top:380.00px;font-size:10.80px;color:#3c3c3c;letter-spacing:-0.096px;">General Queue</span>
<span class="t " style="left:361.70px;top:380.00px;font-size:10.80px;color:#2c5f90;letter-spacing:-0.237px;">Russelle - Tesy Day 4</span>
<span class="t " style="left:592.20px;top:380.00px;font-size:10.80px;color:#3c3c3c;letter-spacing:-0.600px;">50</span>
<span class="t " style="left:711.30px;top:380.00px;font-size:10.80px;color:#3c3c3c;letter-spacing:0.106px;">default 9am to 5pm calling</span>
<span class="t " style="left:941.00px;top:380.00px;font-size:10.80px;color:#3c3c3c;letter-spacing:-0.400px;">120</span>
<div class="tg" style="left:1175px;top:380.00px"><i></i></div>
<span class="t " style="left:1191.70px;top:384.00px;font-size:10.80px;color:#fff;letter-spacing:-0.120px;">Active</span>
<div class="ab" style="left:1449px;top:379.86px"></div>
<svg class="i" style="left:1454.90px;top:384.46px;width:8.30px;height:8.30px;color:#fff" viewBox="0 0 16 16" preserveAspectRatio="none"><path fill="currentColor" fill-rule="evenodd" d="M15.88 6.62 L15.88 9.38 L14.13 9.47 L13.37 11.29 L14.55 12.60 L12.60 14.55 L11.29 13.37 L9.47 14.13 L9.38 15.88 L6.62 15.88 L6.53 14.13 L4.71 13.37 L3.40 14.55 L1.45 12.60 L2.63 11.29 L1.87 9.47 L0.12 9.38 L0.12 6.62 L1.87 6.53 L2.63 4.71 L1.45 3.40 L3.40 1.45 L4.71 2.63 L6.53 1.87 L6.62 0.12 L9.38 0.12 L9.47 1.87 L11.29 2.63 L12.60 1.45 L14.55 3.40 L13.37 4.71 L14.13 6.53Z M5.60 8.00 a2.40 2.40 0 1 0 4.80 0 a2.40 2.40 0 1 0 -4.80 0Z"/></svg>
<svg class="i" style="left:1465.00px;top:387.76px;width:5.00px;height:2.70px;color:#fff" viewBox="0 0 10 5" preserveAspectRatio="none"><path fill="currentColor" d="M0 0h10L5 5z"/></svg>
</div>
<div role="row">
<div style="position:absolute;left:14.00px;top:407.00px;width:1469.00px;height:35.00px;background:#f9f9f9;border-top:1px solid #dedede;box-sizing:border-box"></div>
<div style="position:absolute;left:1398.00px;top:408.00px;width:40.00px;height:34.00px;background:#1a008c"></div>
<span class="t " style="left:21.00px;top:414.00px;font-size:10.80px;color:#2c5f90;letter-spacing:-0.213px;">17007</span>
<svg class="i" style="left:135.30px;top:416.29px;width:11.40px;height:10.50px;color:#3f3f3f" viewBox="0 0 20 18" preserveAspectRatio="none"><g fill="currentColor"><circle cx="4.100" cy="3.300" r="2.700"/><circle cx="15.900" cy="3.300" r="2.700"/><path d="M0 10.300V8.700C0 7 1 6.100 2 6.100c.6.500 1.300.8 2.100.8.600 0 1.100-.1 1.600-.4 0 1.400.5 2.600 1.400 3.500-1.300.1-2.400.700-3.100 1.500H1.400C.6 11.500 0 11 0 10.300z"/><path d="M20 10.300V8.700c0-1.700-1-2.600-2-2.600-.6.500-1.300.8-2.100.8-.6 0-1.100-.1-1.600-.4 0 1.400-.5 2.600-1.400 3.500 1.300.1 2.400.700 3.100 1.500h2.600c.8 0 1.400-.5 1.400-1.200z"/><circle cx="10" cy="6.500" r="3.700"/><path d="M3.500 16.200v-1.500c0-3.100 1.800-4.800 3.400-4.800.8.700 1.900 1.100 3.100 1.100s2.300-.4 3.100-1.100c1.600 0 3.400 1.700 3.400 4.800v1.500c0 1-.8 1.800-1.800 1.800H5.300c-1 0-1.800-.8-1.800-1.800z"/></g></svg>
<span class="t " style="left:149.60px;top:414.00px;font-size:10.80px;color:#3c3c3c;letter-spacing:-0.096px;">General Queue</span>
<span class="t " style="left:361.70px;top:414.00px;font-size:10.80px;color:#2c5f90;letter-spacing:-0.162px;">Russelle Test Day 4 Part 2</span>
<span class="t " style="left:592.20px;top:414.00px;font-size:10.80px;color:#3c3c3c;letter-spacing:-0.600px;">50</span>
<span class="t " style="left:711.30px;top:414.00px;font-size:10.80px;color:#3c3c3c;letter-spacing:0.106px;">default 9am to 5pm calling</span>
<span class="t " style="left:941.00px;top:414.00px;font-size:10.80px;color:#3c3c3c;letter-spacing:-0.400px;">360</span>
<div class="tg" style="left:1175px;top:414.00px"><i></i></div>
<span class="t " style="left:1191.70px;top:418.00px;font-size:10.80px;color:#fff;letter-spacing:-0.120px;">Active</span>
<div class="ab" style="left:1449px;top:414.43px"></div>
<svg class="i" style="left:1454.90px;top:419.03px;width:8.30px;height:8.30px;color:#fff" viewBox="0 0 16 16" preserveAspectRatio="none"><path fill="currentColor" fill-rule="evenodd" d="M15.88 6.62 L15.88 9.38 L14.13 9.47 L13.37 11.29 L14.55 12.60 L12.60 14.55 L11.29 13.37 L9.47 14.13 L9.38 15.88 L6.62 15.88 L6.53 14.13 L4.71 13.37 L3.40 14.55 L1.45 12.60 L2.63 11.29 L1.87 9.47 L0.12 9.38 L0.12 6.62 L1.87 6.53 L2.63 4.71 L1.45 3.40 L3.40 1.45 L4.71 2.63 L6.53 1.87 L6.62 0.12 L9.38 0.12 L9.47 1.87 L11.29 2.63 L12.60 1.45 L14.55 3.40 L13.37 4.71 L14.13 6.53Z M5.60 8.00 a2.40 2.40 0 1 0 4.80 0 a2.40 2.40 0 1 0 -4.80 0Z"/></svg>
<svg class="i" style="left:1465.00px;top:422.33px;width:5.00px;height:2.70px;color:#fff" viewBox="0 0 10 5" preserveAspectRatio="none"><path fill="currentColor" d="M0 0h10L5 5z"/></svg>
</div>
<div role="row">
<div style="position:absolute;left:14.00px;top:442.00px;width:1469.00px;height:34.00px;background:#fff;border-top:1px solid #dedede;box-sizing:border-box"></div>
<div style="position:absolute;left:1398.00px;top:443.00px;width:40.00px;height:33.00px;background:#1a008c"></div>
<span class="t " style="left:21.00px;top:449.00px;font-size:10.80px;color:#2c5f90;letter-spacing:-0.213px;">17012</span>
<svg class="i" style="left:135.30px;top:450.86px;width:11.40px;height:10.50px;color:#3f3f3f" viewBox="0 0 20 18" preserveAspectRatio="none"><g fill="currentColor"><circle cx="4.100" cy="3.300" r="2.700"/><circle cx="15.900" cy="3.300" r="2.700"/><path d="M0 10.300V8.700C0 7 1 6.100 2 6.100c.6.500 1.300.8 2.100.8.600 0 1.100-.1 1.600-.4 0 1.400.5 2.600 1.400 3.500-1.300.1-2.400.700-3.100 1.500H1.400C.6 11.500 0 11 0 10.300z"/><path d="M20 10.300V8.700c0-1.700-1-2.600-2-2.600-.6.500-1.300.8-2.100.8-.6 0-1.100-.1-1.600-.4 0 1.400-.5 2.600-1.400 3.500 1.300.1 2.400.700 3.100 1.500h2.600c.8 0 1.400-.5 1.400-1.200z"/><circle cx="10" cy="6.500" r="3.700"/><path d="M3.500 16.200v-1.500c0-3.100 1.800-4.800 3.400-4.800.8.700 1.900 1.100 3.100 1.100s2.300-.4 3.100-1.100c1.600 0 3.400 1.700 3.400 4.800v1.500c0 1-.8 1.800-1.800 1.800H5.300c-1 0-1.800-.8-1.800-1.800z"/></g></svg>
<span class="t " style="left:149.60px;top:449.00px;font-size:10.80px;color:#3c3c3c;letter-spacing:-0.096px;">General Queue</span>
<span class="t " style="left:361.70px;top:449.00px;font-size:10.80px;color:#2c5f90;letter-spacing:-0.225px;">Rhai Test Day 5</span>
<span class="t " style="left:592.20px;top:449.00px;font-size:10.80px;color:#3c3c3c;letter-spacing:-0.600px;">50</span>
<span class="t " style="left:711.30px;top:449.00px;font-size:10.80px;color:#3c3c3c;letter-spacing:0.106px;">default 9am to 5pm calling</span>
<span class="t " style="left:941.00px;top:449.00px;font-size:10.80px;color:#3c3c3c;letter-spacing:-0.400px;">360</span>
<div class="tg" style="left:1175px;top:449.00px"><i></i></div>
<span class="t " style="left:1191.70px;top:453.00px;font-size:10.80px;color:#fff;letter-spacing:-0.120px;">Active</span>
<div class="ab" style="left:1449px;top:449.00px"></div>
<svg class="i" style="left:1454.90px;top:453.60px;width:8.30px;height:8.30px;color:#fff" viewBox="0 0 16 16" preserveAspectRatio="none"><path fill="currentColor" fill-rule="evenodd" d="M15.88 6.62 L15.88 9.38 L14.13 9.47 L13.37 11.29 L14.55 12.60 L12.60 14.55 L11.29 13.37 L9.47 14.13 L9.38 15.88 L6.62 15.88 L6.53 14.13 L4.71 13.37 L3.40 14.55 L1.45 12.60 L2.63 11.29 L1.87 9.47 L0.12 9.38 L0.12 6.62 L1.87 6.53 L2.63 4.71 L1.45 3.40 L3.40 1.45 L4.71 2.63 L6.53 1.87 L6.62 0.12 L9.38 0.12 L9.47 1.87 L11.29 2.63 L12.60 1.45 L14.55 3.40 L13.37 4.71 L14.13 6.53Z M5.60 8.00 a2.40 2.40 0 1 0 4.80 0 a2.40 2.40 0 1 0 -4.80 0Z"/></svg>
<svg class="i" style="left:1465.00px;top:456.90px;width:5.00px;height:2.70px;color:#fff" viewBox="0 0 10 5" preserveAspectRatio="none"><path fill="currentColor" d="M0 0h10L5 5z"/></svg>
</div>
<div role="row">
<div style="position:absolute;left:14.00px;top:476.00px;width:1469.00px;height:35.00px;background:#f9f9f9;border-top:1px solid #dedede;box-sizing:border-box"></div>
<div style="position:absolute;left:1398.00px;top:477.00px;width:40.00px;height:34.00px;background:#1a008c"></div>
<span class="t " style="left:21.00px;top:484.00px;font-size:10.80px;color:#2c5f90;letter-spacing:-0.213px;">17018</span>
<svg class="i" style="left:135.30px;top:485.43px;width:11.40px;height:10.50px;color:#3f3f3f" viewBox="0 0 20 18" preserveAspectRatio="none"><g fill="currentColor"><circle cx="4.100" cy="3.300" r="2.700"/><circle cx="15.900" cy="3.300" r="2.700"/><path d="M0 10.300V8.700C0 7 1 6.100 2 6.100c.6.500 1.300.8 2.100.8.600 0 1.100-.1 1.600-.4 0 1.400.5 2.600 1.400 3.500-1.300.1-2.400.700-3.100 1.500H1.400C.6 11.500 0 11 0 10.300z"/><path d="M20 10.300V8.700c0-1.700-1-2.600-2-2.600-.6.500-1.300.8-2.100.8-.6 0-1.100-.1-1.600-.4 0 1.400-.5 2.600-1.400 3.500 1.300.1 2.400.700 3.100 1.500h2.600c.8 0 1.400-.5 1.400-1.200z"/><circle cx="10" cy="6.500" r="3.700"/><path d="M3.500 16.200v-1.500c0-3.100 1.800-4.800 3.400-4.800.8.700 1.900 1.100 3.100 1.100s2.300-.4 3.100-1.100c1.600 0 3.400 1.700 3.400 4.800v1.500c0 1-.8 1.800-1.800 1.800H5.300c-1 0-1.800-.8-1.800-1.800z"/></g></svg>
<span class="t " style="left:149.60px;top:484.00px;font-size:10.80px;color:#3c3c3c;letter-spacing:-0.096px;">General Queue</span>
<span class="t " style="left:361.70px;top:484.00px;font-size:10.80px;color:#2c5f90;letter-spacing:-0.225px;">Rhai Test Day 6</span>
<span class="t " style="left:592.20px;top:484.00px;font-size:10.80px;color:#3c3c3c;letter-spacing:-0.600px;">50</span>
<span class="t " style="left:711.30px;top:484.00px;font-size:10.80px;color:#3c3c3c;letter-spacing:0.106px;">default 9am to 5pm calling</span>
<span class="t " style="left:941.00px;top:484.00px;font-size:10.80px;color:#3c3c3c;letter-spacing:-0.400px;">600</span>
<div class="tg" style="left:1175px;top:484.00px"><i></i></div>
<span class="t " style="left:1191.70px;top:488.00px;font-size:10.80px;color:#fff;letter-spacing:-0.120px;">Active</span>
<div class="ab" style="left:1449px;top:483.57px"></div>
<svg class="i" style="left:1454.90px;top:488.17px;width:8.30px;height:8.30px;color:#fff" viewBox="0 0 16 16" preserveAspectRatio="none"><path fill="currentColor" fill-rule="evenodd" d="M15.88 6.62 L15.88 9.38 L14.13 9.47 L13.37 11.29 L14.55 12.60 L12.60 14.55 L11.29 13.37 L9.47 14.13 L9.38 15.88 L6.62 15.88 L6.53 14.13 L4.71 13.37 L3.40 14.55 L1.45 12.60 L2.63 11.29 L1.87 9.47 L0.12 9.38 L0.12 6.62 L1.87 6.53 L2.63 4.71 L1.45 3.40 L3.40 1.45 L4.71 2.63 L6.53 1.87 L6.62 0.12 L9.38 0.12 L9.47 1.87 L11.29 2.63 L12.60 1.45 L14.55 3.40 L13.37 4.71 L14.13 6.53Z M5.60 8.00 a2.40 2.40 0 1 0 4.80 0 a2.40 2.40 0 1 0 -4.80 0Z"/></svg>
<svg class="i" style="left:1465.00px;top:491.47px;width:5.00px;height:2.70px;color:#fff" viewBox="0 0 10 5" preserveAspectRatio="none"><path fill="currentColor" d="M0 0h10L5 5z"/></svg>
</div>
<div role="row">
<div style="position:absolute;left:14.00px;top:511.00px;width:1469.00px;height:34.00px;background:#fff;border-top:1px solid #dedede;box-sizing:border-box"></div>
<div style="position:absolute;left:1398.00px;top:512.00px;width:40.00px;height:33.00px;background:#1a008c"></div>
<span class="t " style="left:21.00px;top:518.00px;font-size:10.80px;color:#2c5f90;letter-spacing:-0.213px;">17019</span>
<svg class="i" style="left:135.30px;top:520.00px;width:11.40px;height:10.50px;color:#3f3f3f" viewBox="0 0 20 18" preserveAspectRatio="none"><g fill="currentColor"><circle cx="4.100" cy="3.300" r="2.700"/><circle cx="15.900" cy="3.300" r="2.700"/><path d="M0 10.300V8.700C0 7 1 6.100 2 6.100c.6.500 1.300.8 2.100.8.600 0 1.100-.1 1.600-.4 0 1.400.5 2.600 1.400 3.500-1.300.1-2.400.700-3.100 1.500H1.400C.6 11.500 0 11 0 10.300z"/><path d="M20 10.300V8.700c0-1.700-1-2.600-2-2.600-.6.500-1.300.8-2.100.8-.6 0-1.100-.1-1.600-.4 0 1.400-.5 2.600-1.400 3.500 1.300.1 2.400.700 3.100 1.500h2.600c.8 0 1.400-.5 1.400-1.200z"/><circle cx="10" cy="6.500" r="3.700"/><path d="M3.500 16.200v-1.500c0-3.100 1.800-4.800 3.400-4.800.8.700 1.900 1.100 3.100 1.100s2.300-.4 3.100-1.100c1.600 0 3.400 1.700 3.400 4.800v1.500c0 1-.8 1.800-1.800 1.800H5.300c-1 0-1.800-.8-1.800-1.800z"/></g></svg>
<span class="t " style="left:149.60px;top:518.00px;font-size:10.80px;color:#3c3c3c;letter-spacing:-0.096px;">General Queue</span>
<span class="t " style="left:361.70px;top:518.00px;font-size:10.80px;color:#2c5f90;letter-spacing:-0.214px;">Russelle Test Day 6</span>
<span class="t " style="left:592.20px;top:518.00px;font-size:10.80px;color:#3c3c3c;letter-spacing:-0.600px;">50</span>
<span class="t " style="left:711.30px;top:518.00px;font-size:10.80px;color:#3c3c3c;letter-spacing:0.106px;">default 9am to 5pm calling</span>
<span class="t " style="left:941.00px;top:518.00px;font-size:10.80px;color:#3c3c3c;letter-spacing:-0.400px;">600</span>
<div class="tg" style="left:1175px;top:518.00px"><i></i></div>
<span class="t " style="left:1191.70px;top:522.00px;font-size:10.80px;color:#fff;letter-spacing:-0.120px;">Active</span>
<div class="ab" style="left:1449px;top:518.14px"></div>
<svg class="i" style="left:1454.90px;top:522.74px;width:8.30px;height:8.30px;color:#fff" viewBox="0 0 16 16" preserveAspectRatio="none"><path fill="currentColor" fill-rule="evenodd" d="M15.88 6.62 L15.88 9.38 L14.13 9.47 L13.37 11.29 L14.55 12.60 L12.60 14.55 L11.29 13.37 L9.47 14.13 L9.38 15.88 L6.62 15.88 L6.53 14.13 L4.71 13.37 L3.40 14.55 L1.45 12.60 L2.63 11.29 L1.87 9.47 L0.12 9.38 L0.12 6.62 L1.87 6.53 L2.63 4.71 L1.45 3.40 L3.40 1.45 L4.71 2.63 L6.53 1.87 L6.62 0.12 L9.38 0.12 L9.47 1.87 L11.29 2.63 L12.60 1.45 L14.55 3.40 L13.37 4.71 L14.13 6.53Z M5.60 8.00 a2.40 2.40 0 1 0 4.80 0 a2.40 2.40 0 1 0 -4.80 0Z"/></svg>
<svg class="i" style="left:1465.00px;top:526.04px;width:5.00px;height:2.70px;color:#fff" viewBox="0 0 10 5" preserveAspectRatio="none"><path fill="currentColor" d="M0 0h10L5 5z"/></svg>
</div>
<div role="row">
<div style="position:absolute;left:14.00px;top:545.00px;width:1469.00px;height:35.00px;background:#f9f9f9;border-top:1px solid #dedede;box-sizing:border-box"></div>
<div style="position:absolute;left:1398.00px;top:546.00px;width:40.00px;height:34.00px;background:#e0341f"></div>
<span class="t " style="left:21.00px;top:553.00px;font-size:10.80px;color:#2c5f90;letter-spacing:-0.213px;">17054</span>
<svg class="i" style="left:135.30px;top:554.57px;width:11.40px;height:10.50px;color:#3f3f3f" viewBox="0 0 20 18" preserveAspectRatio="none"><g fill="currentColor"><circle cx="4.100" cy="3.300" r="2.700"/><circle cx="15.900" cy="3.300" r="2.700"/><path d="M0 10.300V8.700C0 7 1 6.100 2 6.100c.6.500 1.300.8 2.100.8.600 0 1.100-.1 1.600-.4 0 1.400.5 2.600 1.400 3.500-1.300.1-2.400.700-3.100 1.500H1.400C.6 11.500 0 11 0 10.300z"/><path d="M20 10.300V8.700c0-1.700-1-2.600-2-2.600-.6.500-1.300.8-2.100.8-.6 0-1.100-.1-1.600-.4 0 1.400-.5 2.600-1.400 3.500 1.300.1 2.400.700 3.100 1.500h2.600c.8 0 1.400-.5 1.400-1.200z"/><circle cx="10" cy="6.500" r="3.700"/><path d="M3.500 16.200v-1.500c0-3.100 1.800-4.800 3.400-4.800.8.700 1.900 1.100 3.100 1.100s2.300-.4 3.100-1.100c1.600 0 3.400 1.700 3.400 4.800v1.500c0 1-.8 1.800-1.800 1.800H5.300c-1 0-1.800-.8-1.800-1.800z"/></g></svg>
<span class="t " style="left:149.60px;top:553.00px;font-size:10.80px;color:#3c3c3c;letter-spacing:-0.096px;">General Queue</span>
<span class="t " style="left:361.70px;top:553.00px;font-size:10.80px;color:#2c5f90;letter-spacing:-0.255px;">Eli Queue 1</span>
<span class="t " style="left:592.20px;top:553.00px;font-size:10.80px;color:#3c3c3c;letter-spacing:-0.600px;">50</span>
<span class="t " style="left:711.30px;top:553.00px;font-size:10.80px;color:#3c3c3c;letter-spacing:-0.450px;">Eli 10am EST - 2pm EST</span>
<span class="t " style="left:941.00px;top:553.00px;font-size:10.80px;color:#3c3c3c;letter-spacing:-0.400px;">360</span>
<div class="tg" style="left:1175px;top:553.00px"><i></i></div>
<span class="t " style="left:1191.70px;top:557.00px;font-size:10.80px;color:#fff;letter-spacing:-0.120px;">Active</span>
<div class="ab" style="left:1449px;top:552.71px"></div>
<svg class="i" style="left:1454.90px;top:557.31px;width:8.30px;height:8.30px;color:#fff" viewBox="0 0 16 16" preserveAspectRatio="none"><path fill="currentColor" fill-rule="evenodd" d="M15.88 6.62 L15.88 9.38 L14.13 9.47 L13.37 11.29 L14.55 12.60 L12.60 14.55 L11.29 13.37 L9.47 14.13 L9.38 15.88 L6.62 15.88 L6.53 14.13 L4.71 13.37 L3.40 14.55 L1.45 12.60 L2.63 11.29 L1.87 9.47 L0.12 9.38 L0.12 6.62 L1.87 6.53 L2.63 4.71 L1.45 3.40 L3.40 1.45 L4.71 2.63 L6.53 1.87 L6.62 0.12 L9.38 0.12 L9.47 1.87 L11.29 2.63 L12.60 1.45 L14.55 3.40 L13.37 4.71 L14.13 6.53Z M5.60 8.00 a2.40 2.40 0 1 0 4.80 0 a2.40 2.40 0 1 0 -4.80 0Z"/></svg>
<svg class="i" style="left:1465.00px;top:560.61px;width:5.00px;height:2.70px;color:#fff" viewBox="0 0 10 5" preserveAspectRatio="none"><path fill="currentColor" d="M0 0h10L5 5z"/></svg>
</div>
<div role="row">
<div style="position:absolute;left:14.00px;top:580.00px;width:1469.00px;height:35.00px;background:#fff;border-top:1px solid #dedede;box-sizing:border-box"></div>
<div style="position:absolute;left:1398.00px;top:581.00px;width:40.00px;height:34.00px;background:#1a008c"></div>
<span class="t " style="left:21.00px;top:587.00px;font-size:10.80px;color:#2c5f90;letter-spacing:-0.213px;">17553</span>
<svg class="i" style="left:135.30px;top:589.14px;width:11.40px;height:10.50px;color:#3f3f3f" viewBox="0 0 20 18" preserveAspectRatio="none"><g fill="currentColor"><circle cx="4.100" cy="3.300" r="2.700"/><circle cx="15.900" cy="3.300" r="2.700"/><path d="M0 10.300V8.700C0 7 1 6.100 2 6.100c.6.500 1.300.8 2.100.8.600 0 1.100-.1 1.600-.4 0 1.400.5 2.600 1.400 3.500-1.300.1-2.400.700-3.100 1.500H1.400C.6 11.500 0 11 0 10.300z"/><path d="M20 10.300V8.700c0-1.700-1-2.600-2-2.600-.6.500-1.300.8-2.100.8-.6 0-1.100-.1-1.600-.4 0 1.400-.5 2.600-1.400 3.500 1.300.1 2.400.700 3.100 1.500h2.600c.8 0 1.400-.5 1.400-1.200z"/><circle cx="10" cy="6.500" r="3.700"/><path d="M3.500 16.200v-1.500c0-3.100 1.800-4.800 3.400-4.800.8.700 1.900 1.100 3.100 1.100s2.300-.4 3.100-1.100c1.600 0 3.400 1.700 3.400 4.800v1.500c0 1-.8 1.800-1.800 1.800H5.300c-1 0-1.800-.8-1.800-1.800z"/></g></svg>
<span class="t " style="left:149.60px;top:587.00px;font-size:10.80px;color:#3c3c3c;letter-spacing:-0.096px;">General Queue</span>
<span class="t " style="left:361.70px;top:587.00px;font-size:10.80px;color:#2c5f90;letter-spacing:-0.081px;">New Queue</span>
<span class="t " style="left:592.20px;top:587.00px;font-size:10.80px;color:#3c3c3c;letter-spacing:-0.600px;">50</span>
<span class="t " style="left:711.30px;top:587.00px;font-size:10.80px;color:#3c3c3c;letter-spacing:0.106px;">default 9am to 5pm calling</span>
<span class="t " style="left:941.00px;top:587.00px;font-size:10.80px;color:#3c3c3c;letter-spacing:-0.400px;">360</span>
<div class="tg" style="left:1175px;top:587.00px"><i></i></div>
<span class="t " style="left:1191.70px;top:591.00px;font-size:10.80px;color:#fff;letter-spacing:-0.120px;">Active</span>
<div class="ab" style="left:1449px;top:587.28px"></div>
<svg class="i" style="left:1454.90px;top:591.88px;width:8.30px;height:8.30px;color:#fff" viewBox="0 0 16 16" preserveAspectRatio="none"><path fill="currentColor" fill-rule="evenodd" d="M15.88 6.62 L15.88 9.38 L14.13 9.47 L13.37 11.29 L14.55 12.60 L12.60 14.55 L11.29 13.37 L9.47 14.13 L9.38 15.88 L6.62 15.88 L6.53 14.13 L4.71 13.37 L3.40 14.55 L1.45 12.60 L2.63 11.29 L1.87 9.47 L0.12 9.38 L0.12 6.62 L1.87 6.53 L2.63 4.71 L1.45 3.40 L3.40 1.45 L4.71 2.63 L6.53 1.87 L6.62 0.12 L9.38 0.12 L9.47 1.87 L11.29 2.63 L12.60 1.45 L14.55 3.40 L13.37 4.71 L14.13 6.53Z M5.60 8.00 a2.40 2.40 0 1 0 4.80 0 a2.40 2.40 0 1 0 -4.80 0Z"/></svg>
<svg class="i" style="left:1465.00px;top:595.18px;width:5.00px;height:2.70px;color:#fff" viewBox="0 0 10 5" preserveAspectRatio="none"><path fill="currentColor" d="M0 0h10L5 5z"/></svg>
</div>
<div role="row">
<div style="position:absolute;left:14.00px;top:615.00px;width:1469.00px;height:34.00px;background:#f9f9f9;border-top:1px solid #dedede;box-sizing:border-box"></div>
<div style="position:absolute;left:1398.00px;top:616.00px;width:40.00px;height:33.00px;background:#1a008c"></div>
<span class="t " style="left:21.00px;top:622.00px;font-size:10.80px;color:#2c5f90;letter-spacing:-0.213px;">17914</span>
<svg class="i" style="left:135.30px;top:623.71px;width:11.40px;height:10.50px;color:#3f3f3f" viewBox="0 0 20 18" preserveAspectRatio="none"><g fill="currentColor"><circle cx="4.100" cy="3.300" r="2.700"/><circle cx="15.900" cy="3.300" r="2.700"/><path d="M0 10.300V8.700C0 7 1 6.100 2 6.100c.6.500 1.300.8 2.100.8.600 0 1.100-.1 1.600-.4 0 1.400.5 2.600 1.400 3.500-1.300.1-2.400.700-3.100 1.500H1.400C.6 11.500 0 11 0 10.300z"/><path d="M20 10.300V8.700c0-1.700-1-2.600-2-2.600-.6.500-1.300.8-2.100.8-.6 0-1.100-.1-1.600-.4 0 1.400-.5 2.600-1.400 3.500 1.300.1 2.400.700 3.100 1.500h2.600c.8 0 1.400-.5 1.400-1.200z"/><circle cx="10" cy="6.500" r="3.700"/><path d="M3.500 16.200v-1.500c0-3.100 1.800-4.800 3.400-4.800.8.700 1.900 1.100 3.100 1.100s2.300-.4 3.100-1.100c1.600 0 3.400 1.700 3.400 4.800v1.500c0 1-.8 1.800-1.800 1.800H5.300c-1 0-1.800-.8-1.800-1.800z"/></g></svg>
<span class="t " style="left:149.60px;top:622.00px;font-size:10.80px;color:#3c3c3c;letter-spacing:-0.096px;">General Queue</span>
<span class="t " style="left:361.70px;top:622.00px;font-size:10.80px;color:#2c5f90;letter-spacing:-0.317px;">Test LD</span>
<span class="t " style="left:592.20px;top:622.00px;font-size:10.80px;color:#3c3c3c;letter-spacing:-0.600px;">50</span>
<span class="t " style="left:711.30px;top:622.00px;font-size:10.80px;color:#3c3c3c;letter-spacing:0.106px;">default 9am to 5pm calling</span>
<span class="t " style="left:941.00px;top:622.00px;font-size:10.80px;color:#3c3c3c;letter-spacing:-0.400px;">360</span>
<div class="tg" style="left:1175px;top:622.00px"><i></i></div>
<span class="t " style="left:1191.70px;top:626.00px;font-size:10.80px;color:#fff;letter-spacing:-0.120px;">Active</span>
<div class="ab" style="left:1449px;top:621.85px"></div>
<svg class="i" style="left:1454.90px;top:626.45px;width:8.30px;height:8.30px;color:#fff" viewBox="0 0 16 16" preserveAspectRatio="none"><path fill="currentColor" fill-rule="evenodd" d="M15.88 6.62 L15.88 9.38 L14.13 9.47 L13.37 11.29 L14.55 12.60 L12.60 14.55 L11.29 13.37 L9.47 14.13 L9.38 15.88 L6.62 15.88 L6.53 14.13 L4.71 13.37 L3.40 14.55 L1.45 12.60 L2.63 11.29 L1.87 9.47 L0.12 9.38 L0.12 6.62 L1.87 6.53 L2.63 4.71 L1.45 3.40 L3.40 1.45 L4.71 2.63 L6.53 1.87 L6.62 0.12 L9.38 0.12 L9.47 1.87 L11.29 2.63 L12.60 1.45 L14.55 3.40 L13.37 4.71 L14.13 6.53Z M5.60 8.00 a2.40 2.40 0 1 0 4.80 0 a2.40 2.40 0 1 0 -4.80 0Z"/></svg>
<svg class="i" style="left:1465.00px;top:629.75px;width:5.00px;height:2.70px;color:#fff" viewBox="0 0 10 5" preserveAspectRatio="none"><path fill="currentColor" d="M0 0h10L5 5z"/></svg>
</div>
<div role="row">
<div style="position:absolute;left:14.00px;top:649.00px;width:1469.00px;height:35.00px;background:#fff;border-top:1px solid #dedede;box-sizing:border-box"></div>
<div style="position:absolute;left:1398.00px;top:650.00px;width:40.00px;height:34.00px;background:#e0341f"></div>
<span class="t " style="left:21.00px;top:656.00px;font-size:10.80px;color:#2c5f90;letter-spacing:-0.213px;">17992</span>
<svg class="i" style="left:135.30px;top:658.28px;width:11.40px;height:10.50px;color:#3f3f3f" viewBox="0 0 20 18" preserveAspectRatio="none"><g fill="currentColor"><circle cx="4.100" cy="3.300" r="2.700"/><circle cx="15.900" cy="3.300" r="2.700"/><path d="M0 10.300V8.700C0 7 1 6.100 2 6.100c.6.500 1.300.8 2.100.8.600 0 1.100-.1 1.600-.4 0 1.400.5 2.600 1.400 3.500-1.300.1-2.400.700-3.100 1.500H1.400C.6 11.500 0 11 0 10.300z"/><path d="M20 10.300V8.700c0-1.700-1-2.600-2-2.600-.6.500-1.300.8-2.100.8-.6 0-1.100-.1-1.600-.4 0 1.400-.5 2.600-1.400 3.500 1.300.1 2.400.700 3.100 1.500h2.600c.8 0 1.400-.5 1.400-1.200z"/><circle cx="10" cy="6.500" r="3.700"/><path d="M3.500 16.200v-1.500c0-3.100 1.800-4.800 3.400-4.800.8.700 1.900 1.100 3.100 1.100s2.300-.4 3.100-1.100c1.600 0 3.400 1.700 3.400 4.800v1.500c0 1-.8 1.800-1.800 1.800H5.300c-1 0-1.800-.8-1.800-1.800z"/></g></svg>
<span class="t " style="left:149.60px;top:656.00px;font-size:10.80px;color:#3c3c3c;letter-spacing:-0.096px;">General Queue</span>
<span class="t " style="left:361.70px;top:656.00px;font-size:10.80px;color:#2c5f90;letter-spacing:0.105px;">Default Inbound Queue</span>
<span class="t " style="left:592.20px;top:656.00px;font-size:10.80px;color:#3c3c3c;letter-spacing:-0.600px;">99</span>
<span class="t " style="left:711.30px;top:656.00px;font-size:10.80px;color:#3c3c3c;letter-spacing:0.106px;">default 9am to 5pm calling</span>
<span class="t " style="left:941.00px;top:656.00px;font-size:10.80px;color:#3c3c3c;letter-spacing:-0.400px;">360</span>
<div class="tg" style="left:1175px;top:656.00px"><i></i></div>
<span class="t " style="left:1191.70px;top:660.00px;font-size:10.80px;color:#fff;letter-spacing:-0.120px;">Active</span>
<div class="ab" style="left:1449px;top:656.42px"></div>
<svg class="i" style="left:1454.90px;top:661.02px;width:8.30px;height:8.30px;color:#fff" viewBox="0 0 16 16" preserveAspectRatio="none"><path fill="currentColor" fill-rule="evenodd" d="M15.88 6.62 L15.88 9.38 L14.13 9.47 L13.37 11.29 L14.55 12.60 L12.60 14.55 L11.29 13.37 L9.47 14.13 L9.38 15.88 L6.62 15.88 L6.53 14.13 L4.71 13.37 L3.40 14.55 L1.45 12.60 L2.63 11.29 L1.87 9.47 L0.12 9.38 L0.12 6.62 L1.87 6.53 L2.63 4.71 L1.45 3.40 L3.40 1.45 L4.71 2.63 L6.53 1.87 L6.62 0.12 L9.38 0.12 L9.47 1.87 L11.29 2.63 L12.60 1.45 L14.55 3.40 L13.37 4.71 L14.13 6.53Z M5.60 8.00 a2.40 2.40 0 1 0 4.80 0 a2.40 2.40 0 1 0 -4.80 0Z"/></svg>
<svg class="i" style="left:1465.00px;top:664.32px;width:5.00px;height:2.70px;color:#fff" viewBox="0 0 10 5" preserveAspectRatio="none"><path fill="currentColor" d="M0 0h10L5 5z"/></svg>
</div>
<div role="row">
<div style="position:absolute;left:14.00px;top:684.00px;width:1469.00px;height:34.00px;background:#f9f9f9;border-top:1px solid #dedede;box-sizing:border-box"></div>
<div style="position:absolute;left:1398.00px;top:685.00px;width:40.00px;height:33.00px;background:#1a008c"></div>
<span class="t " style="left:21.00px;top:691.00px;font-size:10.80px;color:#2c5f90;letter-spacing:-0.213px;">18030</span>
<svg class="i" style="left:135.30px;top:692.85px;width:11.40px;height:10.50px;color:#3f3f3f" viewBox="0 0 20 18" preserveAspectRatio="none"><g fill="currentColor"><circle cx="4.100" cy="3.300" r="2.700"/><circle cx="15.900" cy="3.300" r="2.700"/><path d="M0 10.300V8.700C0 7 1 6.100 2 6.100c.6.500 1.300.8 2.100.8.600 0 1.100-.1 1.600-.4 0 1.400.5 2.600 1.400 3.500-1.300.1-2.400.700-3.100 1.500H1.400C.6 11.500 0 11 0 10.300z"/><path d="M20 10.300V8.700c0-1.700-1-2.600-2-2.600-.6.500-1.300.8-2.100.8-.6 0-1.100-.1-1.600-.4 0 1.400-.5 2.600-1.400 3.500 1.300.1 2.400.700 3.100 1.500h2.600c.8 0 1.400-.5 1.400-1.200z"/><circle cx="10" cy="6.500" r="3.700"/><path d="M3.500 16.200v-1.500c0-3.100 1.800-4.800 3.400-4.800.8.700 1.900 1.100 3.100 1.100s2.300-.4 3.100-1.100c1.600 0 3.400 1.700 3.400 4.800v1.500c0 1-.8 1.800-1.800 1.800H5.300c-1 0-1.800-.8-1.800-1.800z"/></g></svg>
<span class="t " style="left:149.60px;top:691.00px;font-size:10.80px;color:#3c3c3c;letter-spacing:-0.096px;">General Queue</span>
<span class="t " style="left:361.70px;top:691.00px;font-size:10.80px;color:#2c5f90;letter-spacing:0.065px;">Learning development list 2</span>
<span class="t " style="left:592.20px;top:691.00px;font-size:10.80px;color:#3c3c3c;letter-spacing:-0.600px;">50</span>
<span class="t " style="left:711.30px;top:691.00px;font-size:10.80px;color:#3c3c3c;letter-spacing:0.106px;">default 9am to 5pm calling</span>
<span class="t " style="left:941.00px;top:691.00px;font-size:10.80px;color:#3c3c3c;letter-spacing:-0.400px;">360</span>
<div class="tg" style="left:1175px;top:691.00px"><i></i></div>
<span class="t " style="left:1191.70px;top:695.00px;font-size:10.80px;color:#fff;letter-spacing:-0.120px;">Active</span>
<div class="ab" style="left:1449px;top:690.99px"></div>
<svg class="i" style="left:1454.90px;top:695.59px;width:8.30px;height:8.30px;color:#fff" viewBox="0 0 16 16" preserveAspectRatio="none"><path fill="currentColor" fill-rule="evenodd" d="M15.88 6.62 L15.88 9.38 L14.13 9.47 L13.37 11.29 L14.55 12.60 L12.60 14.55 L11.29 13.37 L9.47 14.13 L9.38 15.88 L6.62 15.88 L6.53 14.13 L4.71 13.37 L3.40 14.55 L1.45 12.60 L2.63 11.29 L1.87 9.47 L0.12 9.38 L0.12 6.62 L1.87 6.53 L2.63 4.71 L1.45 3.40 L3.40 1.45 L4.71 2.63 L6.53 1.87 L6.62 0.12 L9.38 0.12 L9.47 1.87 L11.29 2.63 L12.60 1.45 L14.55 3.40 L13.37 4.71 L14.13 6.53Z M5.60 8.00 a2.40 2.40 0 1 0 4.80 0 a2.40 2.40 0 1 0 -4.80 0Z"/></svg>
<svg class="i" style="left:1465.00px;top:698.89px;width:5.00px;height:2.70px;color:#fff" viewBox="0 0 10 5" preserveAspectRatio="none"><path fill="currentColor" d="M0 0h10L5 5z"/></svg>
</div>
<div role="row">
<div style="position:absolute;left:14.00px;top:718.00px;width:1469.00px;height:35.00px;background:#fff;border-top:1px solid #dedede;box-sizing:border-box"></div>
<div style="position:absolute;left:1398.00px;top:719.00px;width:40.00px;height:34.00px;background:#1a008c"></div>
<span class="t " style="left:21.00px;top:726.00px;font-size:10.80px;color:#2c5f90;letter-spacing:-0.213px;">18031</span>
<svg class="i" style="left:135.30px;top:727.42px;width:11.40px;height:10.50px;color:#3f3f3f" viewBox="0 0 20 18" preserveAspectRatio="none"><g fill="currentColor"><circle cx="4.100" cy="3.300" r="2.700"/><circle cx="15.900" cy="3.300" r="2.700"/><path d="M0 10.300V8.700C0 7 1 6.100 2 6.100c.6.500 1.300.8 2.100.8.600 0 1.100-.1 1.600-.4 0 1.400.5 2.600 1.400 3.500-1.300.1-2.400.700-3.100 1.500H1.400C.6 11.500 0 11 0 10.300z"/><path d="M20 10.300V8.700c0-1.700-1-2.600-2-2.600-.6.500-1.300.8-2.100.8-.6 0-1.100-.1-1.600-.4 0 1.400-.5 2.600-1.400 3.500 1.300.1 2.400.700 3.100 1.500h2.600c.8 0 1.400-.5 1.400-1.200z"/><circle cx="10" cy="6.500" r="3.700"/><path d="M3.500 16.200v-1.500c0-3.100 1.800-4.800 3.400-4.800.8.700 1.900 1.100 3.100 1.100s2.300-.4 3.100-1.100c1.600 0 3.400 1.700 3.400 4.800v1.500c0 1-.8 1.800-1.800 1.800H5.300c-1 0-1.800-.8-1.800-1.800z"/></g></svg>
<span class="t " style="left:149.60px;top:726.00px;font-size:10.80px;color:#3c3c3c;letter-spacing:-0.096px;">General Queue</span>
<span class="t " style="left:362.00px;top:726.00px;font-size:10.80px;color:#2c5f90;letter-spacing:0.054px;">juliannes queue</span>
<span class="t " style="left:592.20px;top:726.00px;font-size:10.80px;color:#3c3c3c;letter-spacing:-0.600px;">50</span>
<span class="t " style="left:711.30px;top:726.00px;font-size:10.80px;color:#3c3c3c;letter-spacing:0.106px;">default 9am to 5pm calling</span>
<span class="t " style="left:941.00px;top:726.00px;font-size:10.80px;color:#3c3c3c;letter-spacing:-0.400px;">120</span>
<div class="tg" style="left:1175px;top:726.00px"><i></i></div>
<span class="t " style="left:1191.70px;top:730.00px;font-size:10.80px;color:#fff;letter-spacing:-0.120px;">Active</span>
<div class="ab" style="left:1449px;top:725.56px"></div>
<svg class="i" style="left:1454.90px;top:730.16px;width:8.30px;height:8.30px;color:#fff" viewBox="0 0 16 16" preserveAspectRatio="none"><path fill="currentColor" fill-rule="evenodd" d="M15.88 6.62 L15.88 9.38 L14.13 9.47 L13.37 11.29 L14.55 12.60 L12.60 14.55 L11.29 13.37 L9.47 14.13 L9.38 15.88 L6.62 15.88 L6.53 14.13 L4.71 13.37 L3.40 14.55 L1.45 12.60 L2.63 11.29 L1.87 9.47 L0.12 9.38 L0.12 6.62 L1.87 6.53 L2.63 4.71 L1.45 3.40 L3.40 1.45 L4.71 2.63 L6.53 1.87 L6.62 0.12 L9.38 0.12 L9.47 1.87 L11.29 2.63 L12.60 1.45 L14.55 3.40 L13.37 4.71 L14.13 6.53Z M5.60 8.00 a2.40 2.40 0 1 0 4.80 0 a2.40 2.40 0 1 0 -4.80 0Z"/></svg>
<svg class="i" style="left:1465.00px;top:733.46px;width:5.00px;height:2.70px;color:#fff" viewBox="0 0 10 5" preserveAspectRatio="none"><path fill="currentColor" d="M0 0h10L5 5z"/></svg>
</div>
<div role="row">
<div style="position:absolute;left:14.00px;top:753.00px;width:1469.00px;height:34.00px;background:#f9f9f9;border-top:1px solid #dedede;box-sizing:border-box"></div>
<div style="position:absolute;left:1398.00px;top:754.00px;width:40.00px;height:33.00px;background:#88f392"></div>
<span class="t " style="left:21.00px;top:760.00px;font-size:10.80px;color:#2c5f90;letter-spacing:-0.213px;">18094</span>
<svg class="i" style="left:135.30px;top:761.99px;width:11.40px;height:10.50px;color:#3f3f3f" viewBox="0 0 20 18" preserveAspectRatio="none"><g fill="currentColor"><circle cx="4.100" cy="3.300" r="2.700"/><circle cx="15.900" cy="3.300" r="2.700"/><path d="M0 10.300V8.700C0 7 1 6.100 2 6.100c.6.500 1.300.8 2.100.8.600 0 1.100-.1 1.600-.4 0 1.400.5 2.600 1.400 3.500-1.300.1-2.400.700-3.100 1.500H1.400C.6 11.500 0 11 0 10.300z"/><path d="M20 10.300V8.700c0-1.700-1-2.600-2-2.600-.6.500-1.300.8-2.100.8-.6 0-1.100-.1-1.600-.4 0 1.400-.5 2.600-1.400 3.500 1.300.1 2.400.700 3.100 1.500h2.600c.8 0 1.400-.5 1.400-1.200z"/><circle cx="10" cy="6.500" r="3.700"/><path d="M3.500 16.200v-1.500c0-3.100 1.800-4.800 3.400-4.800.8.700 1.900 1.100 3.100 1.100s2.300-.4 3.100-1.100c1.600 0 3.400 1.700 3.400 4.800v1.500c0 1-.8 1.800-1.800 1.800H5.300c-1 0-1.800-.8-1.800-1.800z"/></g></svg>
<span class="t " style="left:149.60px;top:760.00px;font-size:10.80px;color:#3c3c3c;letter-spacing:-0.096px;">General Queue</span>
<span class="t " style="left:361.70px;top:760.00px;font-size:10.80px;color:#2c5f90;letter-spacing:0.105px;">Alan Inbound</span>
<span class="t " style="left:592.20px;top:760.00px;font-size:10.80px;color:#3c3c3c;letter-spacing:-0.600px;">10</span>
<span class="t " style="left:711.30px;top:760.00px;font-size:10.80px;color:#3c3c3c;letter-spacing:0.106px;">default 9am to 5pm calling</span>
<span class="t " style="left:941.00px;top:760.00px;font-size:10.80px;color:#3c3c3c;letter-spacing:-0.400px;">360</span>
<div class="tg" style="left:1175px;top:760.00px"><i></i></div>
<span class="t " style="left:1191.70px;top:764.00px;font-size:10.80px;color:#fff;letter-spacing:-0.120px;">Active</span>
<div class="ab" style="left:1449px;top:760.13px"></div>
<svg class="i" style="left:1454.90px;top:764.73px;width:8.30px;height:8.30px;color:#fff" viewBox="0 0 16 16" preserveAspectRatio="none"><path fill="currentColor" fill-rule="evenodd" d="M15.88 6.62 L15.88 9.38 L14.13 9.47 L13.37 11.29 L14.55 12.60 L12.60 14.55 L11.29 13.37 L9.47 14.13 L9.38 15.88 L6.62 15.88 L6.53 14.13 L4.71 13.37 L3.40 14.55 L1.45 12.60 L2.63 11.29 L1.87 9.47 L0.12 9.38 L0.12 6.62 L1.87 6.53 L2.63 4.71 L1.45 3.40 L3.40 1.45 L4.71 2.63 L6.53 1.87 L6.62 0.12 L9.38 0.12 L9.47 1.87 L11.29 2.63 L12.60 1.45 L14.55 3.40 L13.37 4.71 L14.13 6.53Z M5.60 8.00 a2.40 2.40 0 1 0 4.80 0 a2.40 2.40 0 1 0 -4.80 0Z"/></svg>
<svg class="i" style="left:1465.00px;top:768.03px;width:5.00px;height:2.70px;color:#fff" viewBox="0 0 10 5" preserveAspectRatio="none"><path fill="currentColor" d="M0 0h10L5 5z"/></svg>
</div>
<div role="row">
<div style="position:absolute;left:14.00px;top:787.00px;width:1469.00px;height:35.00px;background:#fff;border-top:1px solid #dedede;box-sizing:border-box"></div>
<div style="position:absolute;left:1398.00px;top:788.00px;width:40.00px;height:34.00px;background:#1a008c"></div>
<span class="t " style="left:21.00px;top:795.00px;font-size:10.80px;color:#2c5f90;letter-spacing:-0.213px;">18097</span>
<svg class="i" style="left:135.30px;top:796.56px;width:11.40px;height:10.50px;color:#3f3f3f" viewBox="0 0 20 18" preserveAspectRatio="none"><g fill="currentColor"><circle cx="4.100" cy="3.300" r="2.700"/><circle cx="15.900" cy="3.300" r="2.700"/><path d="M0 10.300V8.700C0 7 1 6.100 2 6.100c.6.500 1.300.8 2.100.8.600 0 1.100-.1 1.600-.4 0 1.400.5 2.600 1.400 3.500-1.300.1-2.400.700-3.100 1.500H1.400C.6 11.500 0 11 0 10.300z"/><path d="M20 10.300V8.700c0-1.700-1-2.600-2-2.600-.6.500-1.300.8-2.100.8-.6 0-1.100-.1-1.600-.4 0 1.400-.5 2.600-1.400 3.500 1.300.1 2.400.700 3.100 1.500h2.600c.8 0 1.400-.5 1.400-1.200z"/><circle cx="10" cy="6.500" r="3.700"/><path d="M3.500 16.200v-1.500c0-3.100 1.800-4.800 3.400-4.800.8.700 1.900 1.100 3.100 1.100s2.300-.4 3.100-1.100c1.600 0 3.400 1.700 3.400 4.800v1.500c0 1-.8 1.800-1.800 1.800H5.300c-1 0-1.800-.8-1.800-1.800z"/></g></svg>
<span class="t " style="left:149.60px;top:795.00px;font-size:10.80px;color:#3c3c3c;letter-spacing:-0.096px;">General Queue</span>
<span class="t " style="left:361.70px;top:795.00px;font-size:10.80px;color:#2c5f90;">Test</span>
<span class="t " style="left:592.20px;top:795.00px;font-size:10.80px;color:#3c3c3c;letter-spacing:-0.600px;">50</span>
<span class="t " style="left:711.30px;top:795.00px;font-size:10.80px;color:#3c3c3c;">default 10am to 5pm calling</span>
<span class="t " style="left:941.00px;top:795.00px;font-size:10.80px;color:#3c3c3c;letter-spacing:-0.400px;">360</span>
<div class="tg" style="left:1175px;top:795.00px"><i></i></div>
<span class="t " style="left:1191.70px;top:799.00px;font-size:10.80px;color:#fff;letter-spacing:-0.120px;">Active</span>
<div class="ab" style="left:1449px;top:794.70px"></div>
<svg class="i" style="left:1454.90px;top:799.30px;width:8.30px;height:8.30px;color:#fff" viewBox="0 0 16 16" preserveAspectRatio="none"><path fill="currentColor" fill-rule="evenodd" d="M15.88 6.62 L15.88 9.38 L14.13 9.47 L13.37 11.29 L14.55 12.60 L12.60 14.55 L11.29 13.37 L9.47 14.13 L9.38 15.88 L6.62 15.88 L6.53 14.13 L4.71 13.37 L3.40 14.55 L1.45 12.60 L2.63 11.29 L1.87 9.47 L0.12 9.38 L0.12 6.62 L1.87 6.53 L2.63 4.71 L1.45 3.40 L3.40 1.45 L4.71 2.63 L6.53 1.87 L6.62 0.12 L9.38 0.12 L9.47 1.87 L11.29 2.63 L12.60 1.45 L14.55 3.40 L13.37 4.71 L14.13 6.53Z M5.60 8.00 a2.40 2.40 0 1 0 4.80 0 a2.40 2.40 0 1 0 -4.80 0Z"/></svg>
<svg class="i" style="left:1465.00px;top:802.60px;width:5.00px;height:2.70px;color:#fff" viewBox="0 0 10 5" preserveAspectRatio="none"><path fill="currentColor" d="M0 0h10L5 5z"/></svg>
</div>
</main>
<div style="position:absolute;left:6.00px;top:73.00px;width:110.00px;height:40.80px;box-sizing:border-box;border:5px solid #662d91;filter:drop-shadow(0.3px 2px 1px rgba(0,0,0,.6))"></div>
<svg class="i" style="left:0;top:0;width:1496px;height:799px;overflow:visible;filter:drop-shadow(0.3px 2px 1px rgba(0,0,0,.55))" viewBox="0 0 1496 799"><path d="M120.6 92.7 L142.8 79.6 L138.3 88.9 L216.0 87.8 A3.5 3.5 0 0 1 216.0 94.8 L138.3 96.5 L143.2 105.0 Z" fill="#662d91" stroke="#662d91" stroke-width="1" stroke-linejoin="round"/></svg>
<div style="position:absolute;left:348.30px;top:159.10px;width:103.50px;height:38.50px;box-sizing:border-box;border:5px solid #662d91;filter:drop-shadow(0.3px 2px 1px rgba(0,0,0,.6))"></div>
<svg class="i" style="left:0;top:0;width:1496px;height:799px;overflow:visible;filter:drop-shadow(0.3px 2px 1px rgba(0,0,0,.55))" viewBox="0 0 1496 799"><path d="M454.7 177.3 L476.7 164.6 L472.2 173.5 L548.0 173.5 A3.5 3.5 0 0 1 548.0 180.5 L472.2 181.1 L477.1 189.5 Z" fill="#662d91" stroke="#662d91" stroke-width="1" stroke-linejoin="round"/></svg>
</div></body></html>
